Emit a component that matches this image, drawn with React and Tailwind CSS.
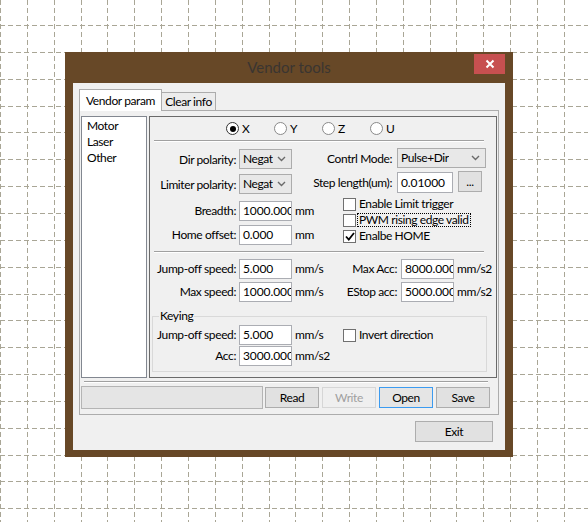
import React from "react";

const STEP = 26.85;

function GridBackground() {
  const xs = [];
  for (let i = 0; i <= 22; i++) xs.push(Math.round(i * STEP) + 0.5);
  const ys = [];
  for (let i = 0; i <= 20; i++) ys.push(Math.round(25 + (i - 1) * STEP) + 0.5);
  return (
    <svg className="absolute inset-0" width="588" height="522">
      {xs.map((x) => (
        <line key={"v" + x} x1={x} y1="0" x2={x} y2="522" stroke="#a9a696" strokeDasharray="5 3" />
      ))}
      {ys.map((y) => (
        <line key={"h" + y} x1="0" y1={y} x2="588" y2={y} stroke="#a9a696" strokeDasharray="5 3" />
      ))}
    </svg>
  );
}

function Chevron() {
  return (
    <svg width="9" height="6" viewBox="0 0 9 6">
      <polyline points="1,1 4.5,4.5 8,1" fill="none" stroke="#6a6a6a" strokeWidth="1.4" />
    </svg>
  );
}

function Select({ value, className }) {
  return (
    <div className={`flex items-center justify-between border border-[#acacac] bg-[#e8e8e8] pl-[3px] pr-[5px] ${className}`}>
      <span className="whitespace-nowrap overflow-hidden">{value}</span>
      <Chevron />
    </div>
  );
}

function Field({ value, className = "" }) {
  return (
    <div className={`flex items-center border border-[#abadb3] bg-white pl-[3px] overflow-hidden whitespace-nowrap tracking-[-0.1px] ${className}`}>
      {value}
    </div>
  );
}

function Radio({ label, checked }) {
  return (
    <div className="w-[48px] flex items-center">
      <div className={`w-[13px] h-[13px] rounded-full border bg-white flex items-center justify-center ${checked ? "border-[#333]" : "border-[#8a8a8a]"}`}>
        {checked && <div className="w-[6px] h-[6px] rounded-full bg-black" />}
      </div>
      <span className="ml-[3px] leading-[13px]">{label}</span>
    </div>
  );
}

function Check({ label, checked, focused }) {
  return (
    <div className="h-[16px] flex items-center">
      <div className="w-[13px] h-[13px] border border-[#707070] bg-white flex items-center justify-center">
        {checked && (
          <svg width="10" height="9" viewBox="0 0 10 9">
            <polyline points="1,4.5 3.8,7.5 9,1" fill="none" stroke="#000" strokeWidth="1.8" />
          </svg>
        )}
      </div>
      {focused ? (
        <span className="ml-[1px] px-[1px] leading-[12px] border border-dotted border-black whitespace-nowrap">{label}</span>
      ) : (
        <span className="ml-[3px] whitespace-nowrap">{label}</span>
      )}
    </div>
  );
}

function Label({ children, className }) {
  return <div className={`flex justify-end whitespace-nowrap shrink-0 ${className}`}><span className="shrink-0">{children}</span></div>;
}

function Button({ children, className = "" }) {
  return (
    <div className={`flex items-center justify-center border ${className}`}>{children}</div>
  );
}

function Separator() {
  return <div className="ml-[4px] w-[330px] h-[2px] border-t border-[#a0a0a0] border-b border-b-white" />;
}

export default function App() {
  return (
    <div className="relative w-[588px] h-[522px] overflow-hidden bg-white pt-[52px] pl-[65px] font-['Lato',sans-serif] text-[12px] tracking-[-0.4px] text-black">
      <GridBackground />
      <div className="relative flex flex-col w-[448px] h-[405px] bg-[#674827] px-[8px] pb-[7px]">
        <div className="relative h-[31px] flex items-center justify-center">
          <span className="text-[15px] tracking-normal text-[#3a3531]">Vendor tools</span>
          <div className="absolute right-0 top-[2px] w-[31px] h-[20px] bg-[#c75050] flex items-center justify-center">
            <svg width="10" height="10" viewBox="0 0 10 10">
              <path d="M1.5 1.5 L8.5 8.5 M8.5 1.5 L1.5 8.5" stroke="#fff" strokeWidth="2" />
            </svg>
          </div>
        </div>

        <div className="flex-1 flex flex-col bg-[#f0f0f0] pl-[6px] pt-[6px]">
          <div className="flex items-end h-[21px]">
            <div className="relative z-10 -mb-px w-[83px] h-[22px] bg-white border border-b-0 border-[#acacac] flex items-center justify-center">
              Vendor param
            </div>
            <div className="w-[54px] h-[18px] bg-[#ececec] border border-l-0 border-b-0 border-[#acacac] flex items-center justify-center">
              Clear info
            </div>
          </div>

          <div className="w-[420px] h-[305px] border border-[#acacac] bg-[#f0f0f0] flex flex-col">
            <div className="mt-[5px] ml-[1px] flex gap-[2px]">
              <div className="w-[66px] h-[262px] bg-white border border-[#828790] pt-[1px] pl-[5px]">
                <div className="h-[16px] leading-[16px]">Motor</div>
                <div className="h-[16px] leading-[16px]">Laser</div>
                <div className="h-[16px] leading-[16px]">Other</div>
              </div>

              <div className="w-[348px] h-[262px] border border-[#6a6a6a] flex flex-col">
                <div className="mt-[5px] h-[13px] pl-[76px] flex">
                  <Radio label="X" checked />
                  <Radio label="Y" />
                  <Radio label="Z" />
                  <Radio label="U" />
                </div>
                <div className="mt-[5px]"><Separator /></div>

                <div className="mt-[6px] h-[21px] flex items-start">
                  <Label className="w-[86px] mt-[3px]">Dir polarity:</Label>
                  <Select value="Negat" className="ml-[3px] mt-[1px] w-[53px] h-[20px]" />
                  <div className="ml-[3px] w-[48px]" />
                  <Label className="w-[49px] mt-[2px]">Contrl Mode:</Label>
                  <Select value="Pulse+Dir" className="ml-[5px] w-[89px] h-[20px]" />
                </div>

                <div className="h-[26px] flex items-start">
                  <Label className="w-[86px] mt-[7px]">Limiter polarity:</Label>
                  <Select value="Negat" className="ml-[3px] mt-[5px] w-[53px] h-[20px]" />
                  <div className="ml-[3px] w-[48px]" />
                  <Label className="w-[49px] mt-[5px]">Step length(um):</Label>
                  <Field value="0.01000" className="ml-[5px] mt-[3px] w-[56px] h-[21px]" />
                  <Button className="ml-[5px] mt-[2px] w-[24px] h-[21px] bg-[#e1e1e1] border-[#adadad]">...</Button>
                </div>

                <div className="h-[52px] flex">
                  <div className="flex flex-col">
                    <div className="mt-[6px] h-[20px] flex items-center">
                      <Label className="w-[86px]">Breadth:</Label>
                      <Field value="1000.000" className="ml-[3px] w-[53px] h-[20px]" />
                      <span className="ml-[3px] w-[48px]">mm</span>
                    </div>
                    <div className="mt-[4px] h-[20px] flex items-center">
                      <Label className="w-[86px]">Home offset:</Label>
                      <Field value="0.000" className="ml-[3px] w-[53px] h-[20px]" />
                      <span className="ml-[3px] w-[48px]">mm</span>
                    </div>
                  </div>
                  <div className="pt-[1px] flex flex-col">
                    <Check label="Enable Limit trigger" />
                    <Check label="PWM rising edge valid" focused />
                    <Check label="Enalbe HOME" checked />
                  </div>
                </div>

                <div className="mt-[4px]"><Separator /></div>

                <div className="mt-[6px] h-[20px] flex items-center">
                  <Label className="w-[86px]">Jump-off speed:</Label>
                  <Field value="5.000" className="ml-[3px] w-[53px] h-[20px]" />
                  <span className="ml-[3px] w-[48px]">mm/s</span>
                  <Label className="w-[54px]">Max Acc:</Label>
                  <Field value="8000.000" className="ml-[4px] w-[53px] h-[20px]" />
                  <span className="ml-[3px]">mm/s2</span>
                </div>
                <div className="mt-[3px] h-[20px] flex items-center">
                  <Label className="w-[86px]">Max speed:</Label>
                  <Field value="1000.000" className="ml-[3px] w-[53px] h-[20px]" />
                  <span className="ml-[3px] w-[48px]">mm/s</span>
                  <Label className="w-[54px]">EStop acc:</Label>
                  <Field value="5000.000" className="ml-[4px] w-[53px] h-[20px]" />
                  <span className="ml-[3px]">mm/s2</span>
                </div>

                <div className="relative mt-[14px] ml-[2px] w-[335px] h-[56px] border border-[#d9d9d9] flex flex-col">
                  <span className="absolute left-[6px] -top-[9px] px-[1px] leading-[15px] bg-[#f0f0f0]">Keying</span>
                  <div className="mt-[8px] h-[20px] flex items-center">
                    <Label className="w-[83px]">Jump-off speed:</Label>
                    <Field value="5.000" className="ml-[3px] w-[53px] h-[20px]" />
                    <span className="ml-[3px] w-[48px]">mm/s</span>
                    <Check label="Invert direction" />
                  </div>
                  <div className="mt-[1px] h-[20px] flex items-center">
                    <Label className="w-[83px]">Acc:</Label>
                    <Field value="3000.000" className="ml-[3px] w-[53px] h-[20px]" />
                    <span className="ml-[3px]">mm/s2</span>
                  </div>
                </div>
              </div>
            </div>

            <div className="mt-[3px] ml-[4px] w-[404px] h-[2px] border-t border-[#a0a0a0] border-b border-b-white" />

            <div className="mt-[3px] ml-[1px] flex items-start">
              <div className="w-[182px] h-[23px] bg-[#e5e5e5] border border-[#b4b4b4]" />
              <Button className="ml-[2px] mt-[1px] w-[54px] h-[21px] bg-[#e1e1e1] border-[#adadad]">Read</Button>
              <Button className="ml-[3px] mt-[1px] w-[54px] h-[21px] bg-[#efefef] border-[#d6d6d6] text-[#a0a0a0]">Write</Button>
              <Button className="ml-[3px] mt-[1px] w-[54px] h-[21px] bg-[#e5e5e5] border-[#3c9bf0]">Open</Button>
              <Button className="ml-[3px] mt-[1px] w-[54px] h-[21px] bg-[#e1e1e1] border-[#adadad]">Save</Button>
            </div>
          </div>

          <Button className="self-end mt-[6px] mr-[12px] w-[78px] h-[21px] bg-[#e1e1e1] border-[#adadad]">Exit</Button>
        </div>
      </div>
    </div>
  );
}
